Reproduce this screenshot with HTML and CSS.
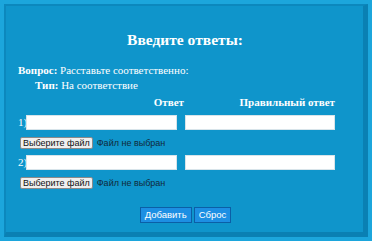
FILE: index.html
```html
<!DOCTYPE html>
<html lang="ru">
<head>
<meta charset="utf-8">
<link rel="stylesheet" href="styles.css">
</head>
<body>
<div class="panel">
  <h1 class="title">Введите ответы:</h1>
  <p class="line q"><b>Вопрос:</b> Расставьте соответственно:</p>
  <p class="line type"><b>Тип:</b> На соответствие</p>
  <div class="grid">
    <div class="head h1">Ответ</div>
    <div class="head h2">Правильный ответ</div>

    <div class="cell"><span class="num">1)</span><span class="input"></span></div>
    <div class="cell"><span class="input wide"></span></div>
    <div class="file"><span class="fbtn">Выберите файл</span><span class="ftext">Файл не выбран</span></div>

    <div class="cell"><span class="num">2)</span><span class="input"></span></div>
    <div class="cell"><span class="input wide"></span></div>
    <div class="file"><span class="fbtn">Выберите файл</span><span class="ftext">Файл не выбран</span></div>
  </div>
  <div class="actions">
    <span class="btn">Добавить</span><span class="btn">Сброс</span>
  </div>
</div>
</body>
</html>
```
FILE: styles.css
```css
html, body { margin: 0; padding: 0; }
body {
  width: 372px;
  height: 241px;
  background: #1ca6dc;
  font-family: "Liberation Serif", "Times New Roman", serif;
  color: #ffffff;
  overflow: hidden;
}
.panel {
  box-sizing: border-box;
  margin: 4px 0 0 4px;
  width: 364px;
  height: 233px;
  background: #0f95cb;
  border-style: solid;
  border-width: 2px 5px 5px 2px;
  border-color: #0c88bd #0a80b3 #0a80b3 #0c88bd;
  padding: 0 0 0 12px;
}
.title {
  margin: 0;
  padding-top: 23px;
  height: 22px;
  font-size: 15.5px;
  line-height: 22px;
  font-weight: bold;
  text-align: center;
  padding-right: 11px;
}
.line {
  margin: 0;
  font-size: 11px;
  line-height: 15px;
}
.q { margin-top: 12px; }
.type { padding-left: 17px; }
.grid {
  display: grid;
  grid-template-columns: 167px 150px;
  margin-top: 2px;
}
.head {
  font-size: 11px;
  font-weight: bold;
  line-height: 15px;
  text-align: right;
  padding-bottom: 4px;
}
.h1 { padding-right: 1px; }
.cell {
  display: flex;
  align-items: center;
  height: 16px;
}
.num {
  font-size: 11px;
  width: 8px;
}
.input {
  display: block;
  box-sizing: border-box;
  width: 151px;
  height: 15px;
  background: #ffffff;
  border: 1px solid #d8e4ea;
}
.wide { width: 150px; }
.file {
  grid-column: 1 / 3;
  display: flex;
  align-items: center;
  padding: 7px 0 5px 2px;
  font-family: "Liberation Sans", Arial, sans-serif;
  font-size: 9px;
}
.fbtn {
  box-sizing: border-box;
  height: 12px;
  line-height: 10px;
  padding: 0 2px;
  background: #efefef;
  border: 1px solid #8a8a8a;
  border-radius: 2px;
  color: #111;
}
.ftext { margin-left: 4px; color: #102a3a; }
.actions {
  display: flex;
  justify-content: center;
  gap: 2px;
  margin-top: 13px;
  padding-right: 10px;
}
.btn {
  box-sizing: border-box;
  height: 16px;
  line-height: 14px;
  padding: 0 4px;
  font-family: "Liberation Sans", Arial, sans-serif;
  font-size: 9.5px;
  color: #fff;
  background: #1d8fe3;
  border: 1px solid #0b5fa6;
}
```
